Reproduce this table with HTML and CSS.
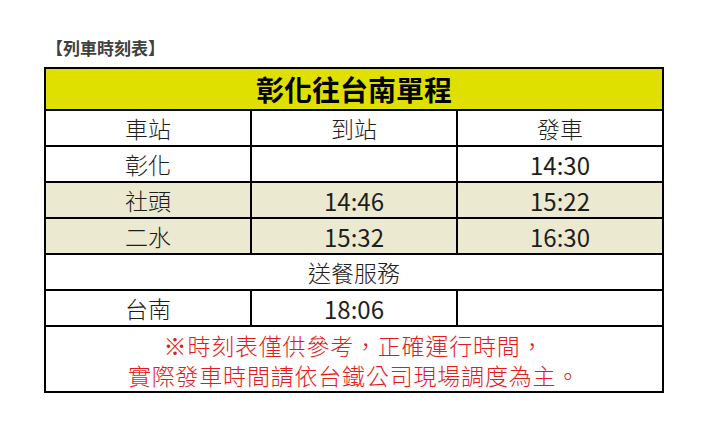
FILE: index.html
```html
<!DOCTYPE html>
<html lang="zh-Hant">
<head>
<meta charset="utf-8">
<title>列車時刻表</title>
<link rel="stylesheet" href="styles.css">
</head>
<body>
<div class="page">
  <div class="title">【列車時刻表】</div>
  <div class="timetable">
    <div class="cell head span3">彰化往台南單程</div>
    <div class="cell">車站</div>
    <div class="cell">到站</div>
    <div class="cell">發車</div>
    <div class="cell">彰化</div>
    <div class="cell"></div>
    <div class="cell num">14:30</div>
    <div class="cell alt">社頭</div>
    <div class="cell alt num">14:46</div>
    <div class="cell alt num">15:22</div>
    <div class="cell alt">二水</div>
    <div class="cell alt num">15:32</div>
    <div class="cell alt num">16:30</div>
    <div class="cell span3">送餐服務</div>
    <div class="cell">台南</div>
    <div class="cell num">18:06</div>
    <div class="cell"></div>
    <div class="cell note span3">
      <div class="note-line">※時刻表僅供參考，正確運行時間，</div>
      <div class="note-line">實際發車時間請依台鐵公司現場調度為主。</div>
    </div>
  </div>
</div>
</body>
</html>
```

FILE: styles.css
```css
html, body {
  margin: 0;
  padding: 0;
  background: #ffffff;
}

.page {
  padding: 37px 0 0 44px;
  font-family: "Noto Sans CJK TC", "Noto Sans", sans-serif;
}

.title {
  font-size: 17px;
  line-height: 22px;
  font-weight: bold;
  color: #404040;
  margin: 0 0 8px 2px;
}

.timetable {
  display: grid;
  grid-template-columns: 204px 204px 204px;
  grid-template-rows: 40px repeat(6, 34px) 64px;
  gap: 2px;
  padding: 2px;
  width: 616px;
  background: #000000;
}

.cell {
  background: #ffffff;
  display: flex;
  align-items: center;
  justify-content: center;
  font-size: 23px;
  color: #1e1e1e;
  font-weight: 300;
}

.span3 {
  grid-column: 1 / span 3;
}

.head {
  background: #e0e000;
  font-size: 28px;
  font-weight: bold;
  color: #000000;
}

.alt {
  background: #ebe9cf;
}

.num {
  font-size: 24px;
  font-weight: 400;
}

.note {
  flex-direction: column;
  padding-top: 5px;
  font-family: "Liberation Sans", "Noto Sans CJK TC", sans-serif;
  color: #e21c1c;
  text-align: center;
  font-size: 23px;
  letter-spacing: 0.8px;
}

.note-line {
  line-height: 30px;
}
```
